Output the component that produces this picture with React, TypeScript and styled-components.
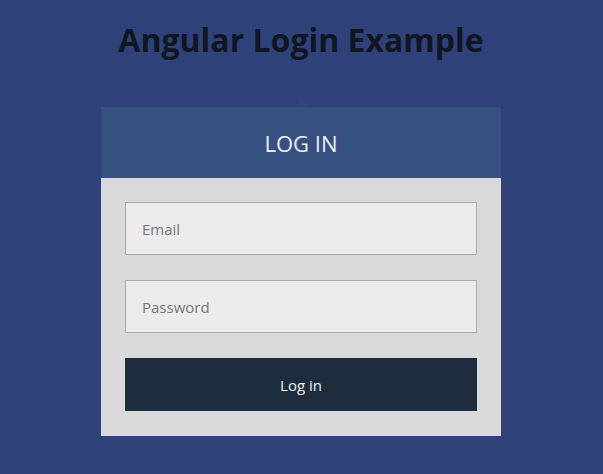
import styled, { createGlobalStyle } from 'styled-components'

const GlobalStyle = createGlobalStyle`
  html, body {
    margin: 0;
    padding: 0;
    background: #2f437a;
    font-family: "Open Sans", "Liberation Sans", sans-serif;
  }
`

const Page = styled.div`
  display: flex;
  flex-direction: column;
  align-items: center;
  min-height: 474px;
  padding-right: 1px;
`

const Title = styled.h1`
  margin: 0;
  padding-top: 17px;
  font-size: 32px;
  line-height: 45px;
  font-weight: 700;
  color: #121622;
`

const Card = styled.div`
  position: relative;
  width: 400px;
  margin-top: 45px;
`

const Arrow = styled.div`
  position: absolute;
  top: -7px;
  left: 50%;
  margin-left: -7px;
  width: 0;
  height: 0;
  border-left: 7px solid transparent;
  border-right: 7px solid transparent;
  border-bottom: 7px solid #31467a;
`

const CardHeader = styled.div`
  height: 71px;
  display: flex;
  align-items: center;
  justify-content: center;
  background: #365080;
  color: #eef0f5;
  font-size: 22px;
`

const Form = styled.form`
  display: flex;
  flex-direction: column;
  gap: 25px;
  padding: 24px 24px 25px;
  background: #d9d9d9;
`

const Input = styled.input`
  box-sizing: border-box;
  width: 100%;
  height: 53px;
  padding: 0 16px;
  border: 1px solid #aaaaaa;
  background: #ebebeb;
  font-family: inherit;
  font-size: 15px;
  color: #333;
  outline: none;

  &::placeholder {
    color: #777;
  }
`

const Button = styled.button`
  height: 53px;
  border: none;
  background: #1e2d3d;
  color: #eef0f2;
  font-family: inherit;
  font-size: 15px;
  cursor: pointer;
`

export default function App() {
  return (
    <Page>
      <GlobalStyle />
      <Title>Angular Login Example</Title>
      <Card>
        <Arrow />
        <CardHeader>LOG IN</CardHeader>
        <Form onSubmit={(e) => e.preventDefault()}>
          <Input type="email" placeholder="Email" />
          <Input type="password" placeholder="Password" />
          <Button type="submit">Log in</Button>
        </Form>
      </Card>
    </Page>
  )
}
